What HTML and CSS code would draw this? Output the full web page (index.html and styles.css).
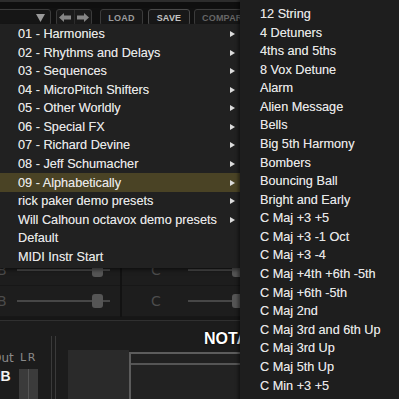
FILE: index.html
```html
<!DOCTYPE html>
<html>
<head>
<meta charset="utf-8">
<link rel="stylesheet" href="styles.css">
</head>
<body>
<div class="app">
  <div class="topstrip"></div>
  <div class="toolbar">
    <div class="field">
      <svg class="caret" width="9" height="8" viewBox="0 0 9 8"><polygon points="0,0 9,0 4.5,8" fill="#9a9a9a"/></svg>
    </div>
    <div class="nav">
      <span class="nav-half">
        <svg width="12" height="9" viewBox="0 0 12 9"><polygon points="0,4.5 5,0 5,2.5 12,2.5 12,6.5 5,6.5 5,9" fill="#858585"/></svg>
      </span>
      <span class="nav-half">
        <svg width="12" height="9" viewBox="0 0 12 9"><polygon points="12,4.5 7,0 7,2.5 0,2.5 0,6.5 7,6.5 7,9" fill="#858585"/></svg>
      </span>
    </div>
    <div class="btn btn-load">LOAD</div>
    <div class="btn btn-save">SAVE</div>
    <div class="btn btn-compare">COMPARE</div>
  </div>
  <div class="upper"></div>
  <div class="sliders">
    <div class="cell cell-left">
      <span class="slabel slabel-b">B</span>
      <div class="track"><span class="thumb" style="left:75px"></span></div>
    </div>
    <div class="cell cell-right">
      <span class="slabel">C</span>
      <div class="track"><span class="thumb" style="left:44px"></span></div>
    </div>
    <div class="cell cell-left">
      <span class="slabel slabel-b">B</span>
      <div class="track"><span class="thumb" style="left:75px"></span></div>
    </div>
    <div class="cell cell-right">
      <span class="slabel">C</span>
      <div class="track"><span class="thumb" style="left:44px"></span></div>
    </div>
  </div>
  <div class="sep"></div>
  <div class="lower">
    <div class="io">
      <div class="io-row">
        <span class="io-label">Out</span>
        <span class="lr">LR</span>
      </div>
      <div class="io-row io-row2">
        <span class="db">dB</span>
        <div class="meter"><span class="meter-ch"></span><span class="meter-ch"></span></div>
      </div>
    </div>
    <div class="vsplit"></div>
    <div class="boxa"></div>
    <div class="notation">
      <div class="notation-title">NOTATION</div>
      <div class="boxb">
        <div class="boxb-head"></div>
        <div class="boxb-body"></div>
      </div>
    </div>
  </div>
</div>

<div class="menu">
  <div class="item"><span>01 - Harmonies</span><span class="arrow"></span></div>
  <div class="item"><span>02 - Rhythms and Delays</span><span class="arrow"></span></div>
  <div class="item"><span>03 - Sequences</span><span class="arrow"></span></div>
  <div class="item"><span>04 - MicroPitch Shifters</span><span class="arrow"></span></div>
  <div class="item"><span>05 - Other Worldly</span><span class="arrow"></span></div>
  <div class="item"><span>06 - Special FX</span><span class="arrow"></span></div>
  <div class="item"><span>07 - Richard Devine</span><span class="arrow"></span></div>
  <div class="item"><span>08 - Jeff Schumacher</span><span class="arrow"></span></div>
  <div class="item active"><span>09 - Alphabetically</span><span class="arrow"></span></div>
  <div class="item"><span>rick paker demo presets</span><span class="arrow"></span></div>
  <div class="item"><span>Will Calhoun octavox demo presets</span><span class="arrow"></span></div>
  <div class="item"><span>Default</span></div>
  <div class="item"><span>MIDI Instr Start</span></div>
</div>

<div class="submenu">
  <div class="sitem">12 String</div>
  <div class="sitem">4 Detuners</div>
  <div class="sitem">4ths and 5ths</div>
  <div class="sitem">8 Vox Detune</div>
  <div class="sitem">Alarm</div>
  <div class="sitem">Alien Message</div>
  <div class="sitem">Bells</div>
  <div class="sitem">Big 5th Harmony</div>
  <div class="sitem">Bombers</div>
  <div class="sitem">Bouncing Ball</div>
  <div class="sitem">Bright and Early</div>
  <div class="sitem">C Maj +3 +5</div>
  <div class="sitem">C Maj +3 -1 Oct</div>
  <div class="sitem">C Maj +3 -4</div>
  <div class="sitem">C Maj +4th +6th -5th</div>
  <div class="sitem">C Maj +6th -5th</div>
  <div class="sitem">C Maj 2nd</div>
  <div class="sitem">C Maj 3rd and 6th Up</div>
  <div class="sitem">C Maj 3rd Up</div>
  <div class="sitem">C Maj 5th Up</div>
  <div class="sitem">C Min +3 +5</div>
</div>
</body>
</html>
```

FILE: styles.css
```css
* { box-sizing: border-box; margin: 0; padding: 0; }
html, body {
  width: 399px;
  height: 399px;
  overflow: hidden;
  background: #1b1b1b;
}
body {
  position: relative;
  font-family: "Liberation Sans", Arial, sans-serif;
}

.app {
  width: 399px;
  height: 399px;
  display: flex;
  flex-direction: column;
  overflow: hidden;
}

.topstrip {
  height: 8px;
  flex: none;
  background: #0f0f0f;
  border-top: 2px solid #2c2c2c;
}

.toolbar {
  height: 18px;
  flex: none;
  display: flex;
  align-items: flex-start;
  padding-top: 1px;
  background: #111;
}

.field {
  width: 57px;
  height: 17px;
  margin-left: -6px;
  border: 1px solid #3b3b3b;
  border-radius: 3px;
  background: #161616;
  display: flex;
  justify-content: flex-end;
  align-items: center;
  padding-right: 5px;
}

.nav {
  width: 36px;
  height: 17px;
  margin-left: 5px;
  border: 1px solid #3b3b3b;
  border-radius: 3px;
  background: #1a1a1a;
  display: flex;
}
.nav-half {
  flex: 1;
  display: flex;
  align-items: center;
  justify-content: center;
}
.nav-half + .nav-half { border-left: 1px solid #2e2e2e; }

.btn {
  height: 17px;
  border: 1px solid #3b3b3b;
  border-radius: 3px;
  background: #181818;
  font-size: 9px;
  font-weight: bold;
  display: flex;
  align-items: center;
  justify-content: center;
  letter-spacing: 0.2px;
}
.btn-load { width: 43px; margin-left: 8px; color: #9c9c9c; }
.btn-save { width: 42px; margin-left: 5px; color: #c4c4c4; border-color: #4a4a4a; }
.btn-compare { width: 62px; margin-left: 4px; color: #666; justify-content: flex-start; padding-left: 7px; }

.upper {
  height: 229px;
  flex: none;
  background: #1b1b1b;
}

.sliders {
  flex: none;
  display: grid;
  grid-template-columns: 120px 1fr;
  grid-template-rows: 31px 31px;
  column-gap: 2px;
  row-gap: 0;
  background: #121212;
}
.cell {
  display: flex;
  align-items: center;
  background: #1d1d1d;
  border-bottom: 1px solid #171717;
}
.slabel {
  font-family: "DejaVu Sans", sans-serif;
  font-size: 14px;
  color: #4c4c4c;
  width: 9px;
  line-height: 14px;
}
.slabel-b { margin-left: -3px; }
.cell-left .track { width: 93px; margin-left: 11px; }
.cell-right { padding-left: 29px; }
.cell-right .track { width: 80px; margin-left: 28px; }

.track {
  position: relative;
  height: 2px;
  background: #474747;
}
.thumb {
  position: absolute;
  top: -6px;
  width: 11px;
  height: 14px;
  border-radius: 3px;
  background: #555;
}

.sep {
  height: 4px;
  flex: none;
  background: #161616;
  border-bottom: 1px solid #303030;
}

.lower {
  flex: 1;
  display: flex;
  background: #1c1c1c;
}

.io {
  width: 50px;
  flex: none;
  padding-top: 31px;
}
.io-row {
  display: flex;
  align-items: center;
}
.io-label {
  font-family: "DejaVu Sans", sans-serif;
  font-size: 12px;
  color: #8a8a8a;
  margin-left: -8px;
  text-align: right;
  padding-right: 7px;
  line-height: 12px;
  white-space: nowrap;
  width: 27px;
}
.lr {
  font-family: "DejaVu Sans", sans-serif;
  font-size: 11px;
  color: #8a8a8a;
  letter-spacing: 1.5px;
  margin-left: 1px;
  line-height: 12px;
}
.io-row2 {
  margin-top: 5px;
  align-items: flex-start;
}
.db {
  font-size: 14px;
  font-weight: bold;
  color: #f2f2f2;
  width: 27px;
  margin-left: -8px;
  text-align: right;
  padding-right: 11px;
  line-height: 14px;
}
.meter {
  width: 19px;
  height: 40px;
  display: flex;
  background: #3b3b3b;
}
.meter-ch { flex: 1; }
.meter-ch + .meter-ch { border-left: 1px solid #555; }

.vsplit {
  width: 5px;
  flex: none;
  margin-left: 1px;
  margin-top: 15px;
  border-left: 1px solid #3a3a3a;
  border-right: 1px solid #3a3a3a;
}

.boxa {
  width: 61px;
  flex: none;
  margin-left: 12px;
  margin-top: 29px;
  background: #2a2a2a;
}

.notation {
  flex: 1;
  display: flex;
  flex-direction: column;
}
.notation-title {
  height: 31px;
  padding-left: 75px;
  padding-top: 10px;
  font-size: 16px;
  font-weight: bold;
  color: #fff;
  line-height: 16px;
  text-shadow: 0 0 2px #000, 0 0 1px #000;
  white-space: nowrap;
  overflow: hidden;
}
.boxb {
  flex: 1;
  border-top: 2px solid #5c5c5c;
  border-left: 2px solid #5c5c5c;
  display: flex;
  flex-direction: column;
}
.boxb-head {
  height: 11px;
  background: #202020;
  border-bottom: 2px solid #555;
}
.boxb-body {
  flex: 1;
  background: #222;
}

/* menus (overlays) */
.menu {
  position: absolute;
  left: 0;
  top: 24px;
  width: 240px;
  padding: 0.7px 0 2px;
  background: #212121;
  box-shadow: 0 2px 4px rgba(0,0,0,0.5);
}
.item {
  height: 18.58px;
  display: flex;
  align-items: center;
  justify-content: space-between;
  padding-left: 18px;
  padding-right: 5px;
  font-size: 12.7px;
  color: #e6e6e6;
  text-shadow: 0 0 0.5px rgba(230,230,230,0.6);
  white-space: nowrap;
}
.item.active { background: #4a4325; }
.arrow {
  width: 0;
  height: 0;
  border-left: 5px solid #dcdcdc;
  border-top: 3px solid transparent;
  border-bottom: 3px solid transparent;
}

.submenu {
  position: absolute;
  left: 240px;
  top: 0;
  width: 170px;
  height: 420px;
  padding-top: 4.7px;
  background: #1e1e1e;
  box-shadow: -2px 0 3px rgba(0,0,0,0.45);
}
.sitem {
  height: 18.58px;
  display: flex;
  align-items: center;
  padding-left: 20px;
  font-size: 12.7px;
  color: #e6e6e6;
  text-shadow: 0 0 0.5px rgba(230,230,230,0.6);
  white-space: nowrap;
}
```
